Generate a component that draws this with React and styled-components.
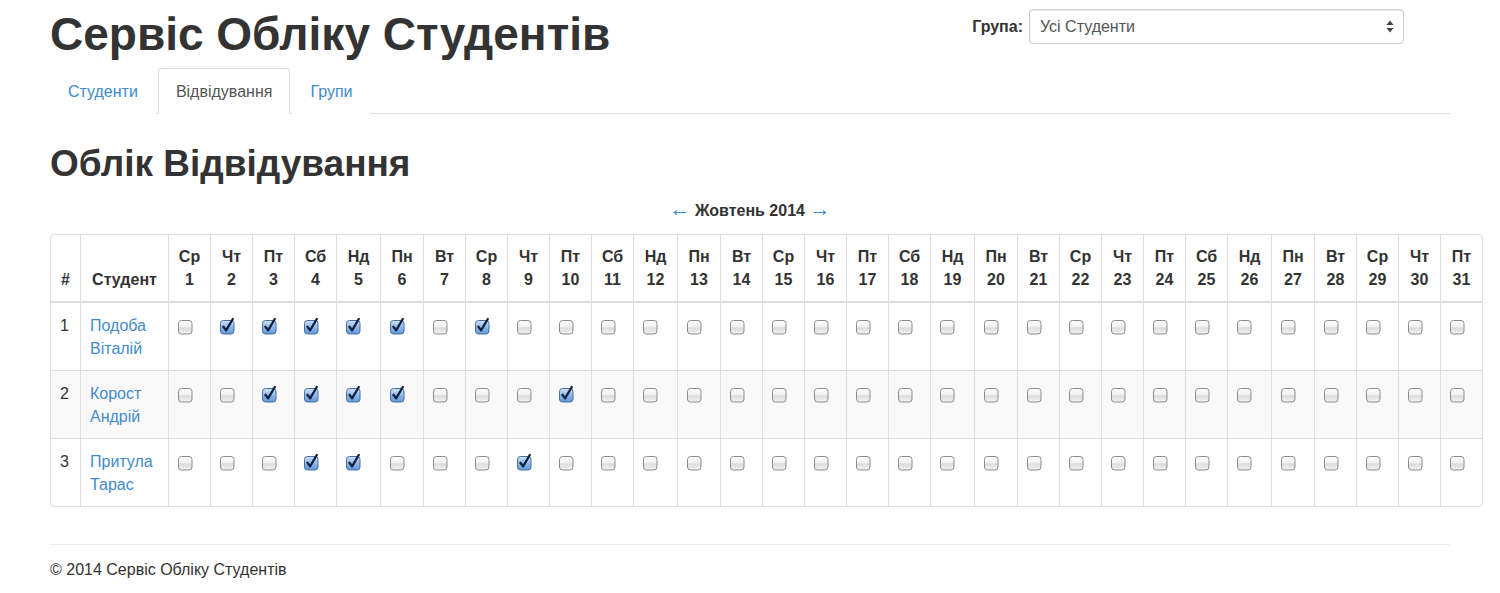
import styled, { createGlobalStyle } from "styled-components";

const GlobalStyle = createGlobalStyle`
	body {
		margin: 0;
		background: #fff;
		color: #333;
		font-family: "Liberation Sans", Arial, sans-serif;
		font-size: 16px;
		line-height: 23px;
	}
	* {
		box-sizing: border-box;
	}
`;

const Page = styled.div`
	width: 1500px;
	padding: 0 50px;
`;

const Header = styled.header`
	display: flex;
	justify-content: space-between;
	align-items: flex-start;
`;

const Title = styled.h1`
	margin: 10px 0 10px;
	font-size: 46px;
	line-height: 48px;
	font-weight: 700;
	color: #333;
`;

const GroupForm = styled.form`
	display: flex;
	align-items: center;
	gap: 6px;
	margin: 9px 46px 0 0;
`;

const GroupLabel = styled.label`
	font-weight: 700;
	color: #333;
`;

const SelectWrap = styled.div`
	position: relative;
	width: 375px;
`;

const Select = styled.select`
	appearance: none;
	width: 100%;
	height: 35px;
	padding: 0 28px 0 10px;
	border: 1px solid #ccc;
	border-radius: 4px;
	background: #fff;
	box-shadow: inset 0 1px 1px rgba(0, 0, 0, 0.075);
	color: #555;
	font: inherit;
	line-height: 23px;
`;

const SelectArrows = styled.svg`
	position: absolute;
	right: 10px;
	top: 11px;
	pointer-events: none;
`;

const Tabs = styled.ul`
	display: flex;
	margin: 0;
	padding: 0;
	list-style: none;
	border-bottom: 1px solid #ddd;
`;

const Tab = styled.li`
	margin: 0 2px -1px 0;
`;

const TabLink = styled.a`
	display: block;
	padding: 11px 17px 10px;
	border: 1px solid ${(p) => (p.$active ? "#ddd" : "transparent")};
	border-bottom-color: ${(p) => (p.$active ? "#fff" : "transparent")};
	border-radius: 4px 4px 0 0;
	background: #fff;
	color: ${(p) => (p.$active ? "#555" : "#428bca")};
	text-decoration: none;
`;

const SectionTitle = styled.h2`
	margin: 30px 0 15px;
	font-size: 37px;
	line-height: 40px;
	font-weight: 700;
	color: #333;
`;

const MonthNav = styled.p`
	margin: 0 0 12px;
	text-align: center;
	font-weight: 700;
`;

const NavArrow = styled.a`
	color: #428bca;
	font-size: 21px;
	line-height: 0;
	font-weight: 400;
	text-decoration: none;
`;

const TableFrame = styled.div`
	width: max-content;
	border: 1px solid #ddd;
	border-radius: 4px;
	overflow: hidden;
`;

const Table = styled.table`
	border-collapse: separate;
	border-spacing: 0;

	tbody tr:nth-child(even) td {
		background: #f9f9f9;
	}
	tbody tr + tr td {
		border-top: 1px solid #ddd;
	}
	th + th,
	td + td {
		border-left: 1px solid #ddd;
	}
`;

const HeadCell = styled.th`
	width: ${(p) => p.$w}px;
	min-width: ${(p) => p.$w}px;
	padding: 10px 9px;
	border-bottom: 2px solid #ddd;
	text-align: center;
	vertical-align: bottom;
	font-weight: 700;
	white-space: nowrap;
`;

const Cell = styled.td`
	padding: 11px 9px 10px;
	vertical-align: top;
	text-align: left;
`;

const StudentLink = styled.a`
	color: #428bca;
	text-decoration: none;
`;

const Box = styled.svg`
	display: block;
	margin-top: 4px;
	overflow: visible;
`;

const Footer = styled.footer`
	margin-top: 37px;
	border-top: 1px solid #eee;
	padding-top: 13px;
`;

function Checkbox({ checked }) {
	return (
		<Box width="16" height="16" viewBox="0 0 16 16">
			<defs>
				<linearGradient id="cbOff" x1="0" y1="0" x2="0" y2="1">
					<stop offset="0" stopColor="#ffffff" />
					<stop offset="0.45" stopColor="#f1f1f1" />
					<stop offset="0.55" stopColor="#dcdcdc" />
					<stop offset="1" stopColor="#f4f4f4" />
				</linearGradient>
				<linearGradient id="cbOn" x1="0" y1="0" x2="0" y2="1">
					<stop offset="0" stopColor="#cfe2f8" />
					<stop offset="0.5" stopColor="#8fb9ea" />
					<stop offset="1" stopColor="#5f98dc" />
				</linearGradient>
			</defs>
			<rect
				x="0.5"
				y="2.5"
				width="13.5"
				height="13.5"
				rx="3"
				fill={checked ? "url(#cbOn)" : "url(#cbOff)"}
				stroke={checked ? "#4d6f9c" : "#8c8c8c"}
			/>
			{checked && (
				<path
					d="M3.4 8.8 L6.1 12.4 L12.8 1"
					fill="none"
					stroke="#13213f"
					strokeWidth="2.3"
					strokeLinecap="round"
					strokeLinejoin="round"
				/>
			)}
		</Box>
	);
}

const WEEK = ["Нд", "Пн", "Вт", "Ср", "Чт", "Пт", "Сб"];
const WIDTH = { Нд: 44, Пн: 43, Вт: 42, Ср: 42, Чт: 42, Пт: 42, Сб: 42 };

// October 2014 starts on a Wednesday
const days = Array.from({ length: 31 }, (_, i) => {
	const name = WEEK[(i + 3) % 7];
	return { day: i + 1, name, width: WIDTH[name] };
});

const students = [
	{ id: 1, name: ["Подоба", "Віталій"], present: [2, 3, 4, 5, 6, 8] },
	{ id: 2, name: ["Корост", "Андрій"], present: [3, 4, 5, 6, 10] },
	{ id: 3, name: ["Притула", "Тарас"], present: [4, 5, 9] },
];

const tabs = [
	{ label: "Студенти" },
	{ label: "Відвідування", active: true },
	{ label: "Групи" },
];

export default function App() {
	return (
		<>
			<GlobalStyle />
			<Page>
				<Header>
					<Title>Сервіс Обліку Студентів</Title>
					<GroupForm>
						<GroupLabel htmlFor="group">Група:</GroupLabel>
						<SelectWrap>
							<Select id="group" defaultValue="all">
								<option value="all">Усі Студенти</option>
							</Select>
							<SelectArrows width="8" height="13" viewBox="0 0 8 13">
								<path d="M4 0.5 L7.5 5 L0.5 5 Z" fill="#444" />
								<path d="M4 12.5 L7.5 8 L0.5 8 Z" fill="#444" />
							</SelectArrows>
						</SelectWrap>
					</GroupForm>
				</Header>

				<Tabs>
					{tabs.map((t) => (
						<Tab key={t.label}>
							<TabLink href="#" $active={t.active}>
								{t.label}
							</TabLink>
						</Tab>
					))}
				</Tabs>

				<SectionTitle>Облік Відвідування</SectionTitle>

				<MonthNav>
					<NavArrow href="#">←</NavArrow> Жовтень 2014 <NavArrow href="#">→</NavArrow>
				</MonthNav>

				<TableFrame>
					<Table>
						<thead>
							<tr>
								<HeadCell $w={29}>#</HeadCell>
								<HeadCell $w={88}>Студент</HeadCell>
								{days.map((d) => (
									<HeadCell key={d.day} $w={d.width}>
										{d.name}
										<br />
										{d.day}
									</HeadCell>
								))}
							</tr>
						</thead>
						<tbody>
							{students.map((s) => (
								<tr key={s.id}>
									<Cell>{s.id}</Cell>
									<Cell>
										<StudentLink href="#">
											{s.name[0]}
											<br />
											{s.name[1]}
										</StudentLink>
									</Cell>
									{days.map((d) => (
										<Cell key={d.day}>
											<Checkbox checked={s.present.includes(d.day)} />
										</Cell>
									))}
								</tr>
							))}
						</tbody>
					</Table>
				</TableFrame>

				<Footer>© 2014 Сервіс Обліку Студентів</Footer>
			</Page>
		</>
	);
}
